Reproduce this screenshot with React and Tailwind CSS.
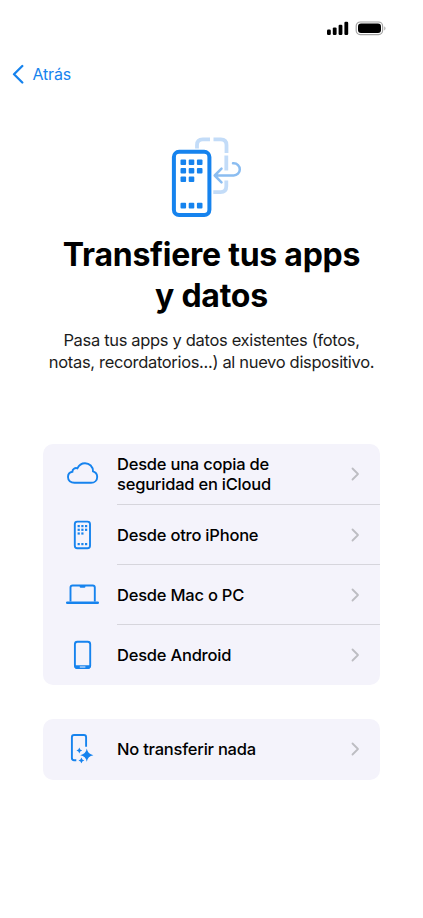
const BLUE = '#1683ee'

function StatusBar() {
  return (
    <div className="h-[56px] pt-5 pl-[326px]">
      <svg width="62" height="18" viewBox="0 0 62 18">
        <rect x="1" y="9.6" width="3.8" height="5.4" rx="1.2" />
        <rect x="6.8" y="7.4" width="3.8" height="7.6" rx="1.2" />
        <rect x="12.6" y="4.8" width="3.8" height="10.2" rx="1.2" />
        <rect x="18.4" y="1.8" width="3.8" height="13.2" rx="1.2" />
        <rect x="30.2" y="2" width="26.4" height="12.6" rx="4" fill="none" stroke="#a3a3a3" strokeWidth="1.2" />
        <rect x="32" y="3.6" width="23" height="9.5" rx="3" />
        <path d="M58.3 6.3c1.6.8 1.6 3.4 0 4.2z" fill="#a3a3a3" />
      </svg>
    </div>
  )
}

function TransferArt() {
  return (
    <svg width="90" height="95" viewBox="0 0 90 95" fill="none">
      <g stroke="#c3dcf8" strokeWidth="3.8">
        <path d="M37 18.5v-3.5q0-5.7 5.7-5.7H50" />
        <path d="M53.5 9.3h7.3q5.7 0 5.7 5.7v8" />
        <path d="M66.3 25.5v15" />
        <path d="M66.3 50.5v5.8q0 5.8-5.8 5.8H53.3" />
      </g>
      <path d="M73 33.3h.7a6.1 6.1 0 0 1 0 12.2H55M61.5 38.7L54.7 45.5l6.8 6.8" stroke="#8bbdf1" strokeWidth="2.5" strokeLinecap="round" strokeLinejoin="round" />
      <rect x="13.9" y="21.8" width="35.5" height="63.2" rx="5.2" fill="#fff" stroke={BLUE} strokeWidth="4" />
      {[32.3, 40.8, 49.3, 75.6].map((y, row) =>
        [23.3, 31.5, 39.7].map((x, col) =>
          row === 2 && col === 2 ? null : (
            <rect key={`${x}-${y}`} x={x - 2.8} y={y - 2.8} width="5.6" height="5.6" rx="1" fill={BLUE} />
          )
        )
      )}
    </svg>
  )
}

function CloudIcon() {
  return <path d="M31.5 38.8C27.7 38.8 25 36.5 25 33.1C25 30.1 27 28 29.4 27.7C29.4 25.1 31.9 23.5 34.4 24.3C35.9 21.1 38.6 19.2 42 19.2C46.6 19.2 50 22.6 50 27.3C52.5 28 54.2 30.2 54.2 32.9C54.2 36.4 51.6 38.8 48 38.8Z" />
}

function IPhoneIcon() {
  return (
    <>
      <rect x="31.8" y="16.6" width="15.2" height="26.7" rx="2.5" />
      {[21.1, 24.8, 28.5, 39.1].map((y, row) =>
        [35.7, 39.4, 43.1].map((x, col) =>
          row === 2 && col === 2 ? null : (
            <rect key={`${x}-${y}`} x={x - 1.1} y={y - 1.1} width="2.2" height="2.2" fill={BLUE} stroke="none" />
          )
        )
      )}
    </>
  )
}

function LaptopIcon() {
  return (
    <>
      <path d="M27.5 36.6V22.6q0-2.1 2.1-2.1h20.1q2.1 0 2.1 2.1v14" />
      <path d="M36.7 20.4h5.7v1.3q0 1-1 1h-3.7q-1 0-1-1z" fill={BLUE} stroke="none" />
      <rect x="23" y="36.4" width="33" height="2.5" rx="1.2" fill={BLUE} stroke="none" />
    </>
  )
}

function AndroidIcon() {
  return (
    <>
      <rect x="31.9" y="16.7" width="15.3" height="26.4" rx="2.5" />
      <path d="M31.5 40.2h16v1q0 2.7-2.7 2.7h-10.6q-2.7 0-2.7-2.7z" fill={BLUE} stroke="none" />
      <path d="M36.8 42h5.6" stroke="#f4f3fb" strokeWidth="1" />
    </>
  )
}

function SparkleIcon() {
  return (
    <>
      <path d="M33.3 41.2h-2.2q-2.2 0-2.2-2.2V18.2q0-2.2 2.2-2.2h9.800q2.200 0 2.200 2.200v9.600" />
      <g fill={BLUE} stroke="none">
        <path d="M43.8 29.6Q44.7 35.3 50.4 36.2Q44.7 37.1 43.8 42.8Q42.9 37.1 37.2 36.2Q42.9 35.3 43.8 29.6Z" />
        <path d="M36.3 28.6Q36.7 31.1 39.2 31.5Q36.7 31.9 36.3 34.4Q35.9 31.9 33.4 31.5Q35.9 31.1 36.3 28.6Z" />
        <path d="M38.4 38.6Q38.8 41.1 41.3 41.5Q38.8 41.9 38.4 44.4Q38 41.9 35.5 41.5Q38 41.1 38.4 38.6Z" />
      </g>
    </>
  )
}

const OPTIONS = [
  { label: 'Desde una copia de seguridad en iCloud', Icon: CloudIcon },
  { label: 'Desde otro iPhone', Icon: IPhoneIcon },
  { label: 'Desde Mac o PC', Icon: LaptopIcon },
  { label: 'Desde Android', Icon: AndroidIcon },
]

function Row({ label, Icon, divider }) {
  return (
    <button className="flex h-[60.2px] w-full text-left">
      <svg className="shrink-0" width="74" height="60" viewBox="0 0 74 60" fill="none" stroke={BLUE} strokeWidth="1.9">
        <Icon />
      </svg>
      <span className={`flex flex-1 items-center justify-between pr-[20px] ${divider ? 'border-b border-[#d6d5dc] pt-px' : 'pb-px'}`}>
        <span className="w-[175px] text-[16.5px] leading-[20px] font-[470] tracking-[-0.22px]">{label}</span>
        <svg width="9" height="14" viewBox="0 0 9 14" fill="none" stroke="#bdbdc2" strokeWidth="1.8">
          <path d="M1.5 1.5L7 7l-5.5 5.5" strokeLinecap="round" strokeLinejoin="round" />
        </svg>
      </span>
    </button>
  )
}

export default function App() {
  return (
    <div className="h-[918px] w-[423px] overflow-hidden bg-white font-['Inter',sans-serif] text-black">
      <StatusBar />
      <button className="flex h-[36px] items-center gap-[7.5px] pl-[12px] text-[16px] text-[#1683ee]">
        <svg width="13" height="20" viewBox="0 0 13 20" fill="none" stroke={BLUE} strokeWidth="2.3" strokeLinecap="round" strokeLinejoin="round">
          <path d="M10.3 2L2 10.3l8.3 8.2" />
        </svg>
        <span className="tracking-[-0.2px]">Atrás</span>
      </button>
      <div className="mt-[37.5px] pl-[160px]">
        <TransferArt />
      </div>
      <h1 className="mt-[9.5px] text-center text-[32px] leading-[41px] font-bold tracking-[-0.25px]">
        Transfiere tus apps<br />y datos
      </h1>
      <p className="mt-[12.5px] text-center text-[16.5px] leading-[22px] tracking-[-0.33px] text-[#1c1c1c]">
        Pasa tus apps y datos existentes (fotos,<br />notas, recordatorios...) al nuevo dispositivo.
      </p>
      <div className="mt-[71.900px] ml-[43px] w-[337px] overflow-hidden rounded-[10px] bg-[#f4f3fb]">
        {OPTIONS.map((o, i) => (
          <Row key={o.label} {...o} divider={i < OPTIONS.length - 1} />
        ))}
      </div>
      <div className="mt-[34.2px] ml-[43px] w-[337px] overflow-hidden rounded-[10px] bg-[#f4f3fb]">
        <Row label="No transferir nada" Icon={SparkleIcon} />
      </div>
    </div>
  )
}
